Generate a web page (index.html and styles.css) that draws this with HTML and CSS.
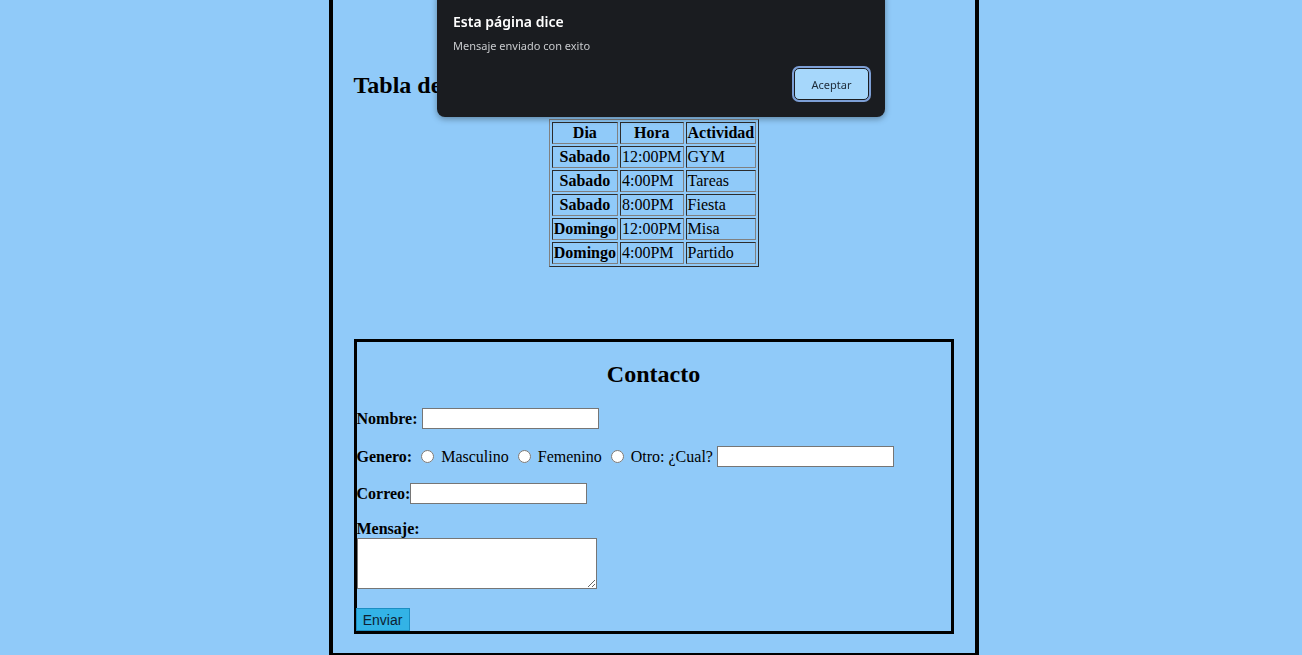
FILE: index.html
```html
<!DOCTYPE html>
<html lang="es">
<head>
<meta charset="utf-8">
<title>Agenda</title>
<link rel="stylesheet" href="styles.css">
</head>
<body>
<div class="page">
  <h2 class="title">Tabla de actividades</h2>
  <table class="agenda">
    <tr><th>Dia</th><th>Hora</th><th>Actividad</th></tr>
    <tr><th>Sabado</th><td>12:00PM</td><td>GYM</td></tr>
    <tr><th>Sabado</th><td>4:00PM</td><td>Tareas</td></tr>
    <tr><th>Sabado</th><td>8:00PM</td><td>Fiesta</td></tr>
    <tr><th>Domingo</th><td>12:00PM</td><td>Misa</td></tr>
    <tr><th>Domingo</th><td>4:00PM</td><td>Partido</td></tr>
  </table>
  <form class="contact">
    <h2 class="contact-title">Contacto</h2>
    <div class="row row-a"><b>Nombre:</b> <input class="field" type="text"></div>
    <div class="row row-b"><b>Genero:</b> <input class="radio" type="radio" name="g"> Masculino <input class="radio" type="radio" name="g"> Femenino <input class="radio" type="radio" name="g"> Otro: ¿Cual? <input class="field" type="text"></div>
    <div class="row row-c"><b>Correo:</b><input class="field" type="text"></div>
    <div class="msg-label"><b>Mensaje:</b></div>
    <textarea class="msg"></textarea>
    <button class="send" type="button">Enviar</button>
  </form>
</div>

<div class="dialog">
  <div class="dialog-title">Esta página dice</div>
  <div class="dialog-text">Mensaje enviado con exito</div>
  <div class="dialog-actions"><button class="dialog-btn" type="button">Aceptar</button></div>
</div>
</body>
</html>
```
FILE: styles.css
```css
html, body {
  margin: 0;
  background: #90caf9;
}
body {
  padding-left: 5px;
  font-family: "Liberation Serif", "Times New Roman", serif;
  font-size: 16px;
  color: #000;
}
.page {
  width: 601px;
  margin: 0 auto;
  padding: 71px 20px 19px 21px;
  border: 4px solid #000;
  border-top: none;
}
.title {
  font-size: 24px;
  font-weight: bold;
  margin: 0 0 20px 0;
  line-height: 28px;
}
.agenda {
  margin: 0 auto;
  border: 1px outset grey;
  border-spacing: 2px;
  border-collapse: separate;
}
.agenda th, .agenda td {
  border: 1px inset grey;
  padding: 1px;
  line-height: 18px;
}
.agenda th { text-align: center; font-weight: bold; }
.agenda td { text-align: left; }
.contact {
  display: block;
  width: 594px;
  margin-top: 72px;
  border: 3px solid #000;
}
.contact-title {
  text-align: center;
  font-size: 24px;
  margin: 18px 0 20px 0;
  line-height: 28px;
}
.row {
  height: 21px;
  line-height: 21px;
  white-space: nowrap;
}
.row-a { margin-bottom: 17px; }
.row-b { margin-bottom: 16px; }
.row-c { margin-bottom: 16px; }
.field {
  box-sizing: border-box;
  width: 177px;
  height: 21px;
  border: 1px solid #767676;
  background: #fff;
  padding: 1px 2px;
  margin: 0;
  vertical-align: top;
  font: 13.33px Arial, "Liberation Sans", sans-serif;
}
.radio {
  width: 13px;
  height: 13px;
  margin: 0 3px 0 5px;
  vertical-align: -1px;
}
.msg-label {
  line-height: 18px;
  height: 18px;
}
.msg {
  display: block;
  box-sizing: border-box;
  width: 240px;
  height: 51px;
  margin: 0;
  border: 1px solid #767676;
  background: #fff;
  resize: vertical;
}
.send {
  display: block;
  margin: 19px 0 0 -1px;
  width: 54px;
  height: 23px;
  padding: 0;
  background: #33b3e6;
  border: 1px solid #1b8ec2;
  color: #0d2233;
  font: 14px "Liberation Sans", Arial, sans-serif;
}
.dialog {
  position: fixed;
  left: 437px;
  top: -10px;
  width: 448px;
  box-sizing: border-box;
  padding: 23px 16px 17px 16px;
  background: #1a1c20;
  border-radius: 8px;
  box-shadow: 0 2px 6px rgba(0,0,0,0.35);
  font-family: "Noto Sans", "Open Sans", sans-serif;
}
.dialog-title {
  color: #fff;
  font-size: 14px;
  font-weight: 600;
  line-height: 18px;
}
.dialog-text {
  color: #c8cacd;
  font-size: 11px;
  line-height: 16px;
  margin-top: 7px;
}
.dialog-actions {
  display: flex;
  justify-content: flex-end;
  margin-top: 14px;
}
.dialog-btn {
  width: 75px;
  height: 32px;
  margin-right: 0;
  border-radius: 5px;
  background: #a6d7fb;
  border: 1px solid #1a1c20;
  box-shadow: 0 0 0 2px #7d9fd6;
  color: #1c2a38;
  font-family: "Noto Sans", "Open Sans", sans-serif;
  font-size: 11px;
}
```
